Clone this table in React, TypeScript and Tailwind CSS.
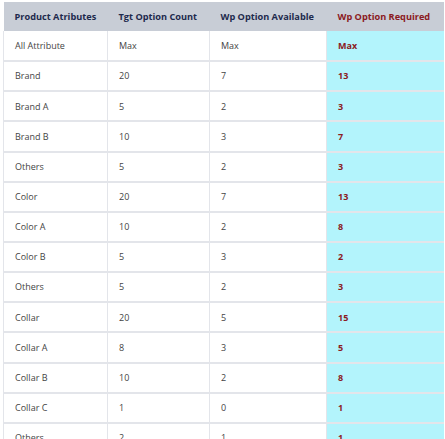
const rows: [string, string, string, string][] = [
  ["All Attribute", "Max", "Max", "Max"],
  ["Brand", "20", "7", "13"],
  ["Brand A", "5", "2", "3"],
  ["Brand B", "10", "3", "7"],
  ["Others", "5", "2", "3"],
  ["Color", "20", "7", "13"],
  ["Color A", "10", "2", "8"],
  ["Color B", "5", "3", "2"],
  ["Others", "5", "2", "3"],
  ["Collar", "20", "5", "15"],
  ["Collar A", "8", "3", "5"],
  ["Collar B", "10", "2", "8"],
  ["Collar C", "1", "0", "1"],
  ["Others", "2", "1", "1"],
];

export default function App() {
  return (
    <div className="w-[445px] h-[439px] overflow-hidden bg-white pl-[3px] pt-[2px] font-['Open_Sans',sans-serif]">
      <table className="w-[440px] table-fixed border-collapse text-[9px]">
        <colgroup>
          <col className="w-[104px]" />
          <col className="w-[102px]" />
          <col className="w-[117px]" />
          <col className="w-[117px]" />
        </colgroup>
        <thead>
          <tr className="h-[29px] bg-[#c8cdd6] font-bold text-left text-[9.2px]">
            <th className="pl-[11px] text-[#1e2a4d]">Product Atributes</th>
            <th className="pl-[11px] text-[#1e2a4d]">Tgt Option Count</th>
            <th className="pl-[11px] text-[#1e2a4d]">Wp Option Available</th>
            <th className="pl-[11px] text-[#8b1a22]">Wp Option Required</th>
          </tr>
        </thead>
        <tbody>
          {rows.map((r, i) => (
            <tr key={i} className="h-[30.15px] border-b-2 border-[#e3e5ea]">
              <td className="pl-[11px] text-[#444] border-l border-r border-[#e3e5ea]">{r[0]}</td>
              <td className="pl-[11px] text-[#444] border-r border-[#e3e5ea]">{r[1]}</td>
              <td className="pl-[11px] text-[#444] border-r border-[#e3e5ea]">{r[2]}</td>
              <td className="pl-[11px] font-bold text-[#8b1a22] bg-[#b3f4fc]">{r[3]}</td>
            </tr>
          ))}
        </tbody>
      </table>
    </div>
  );
}
